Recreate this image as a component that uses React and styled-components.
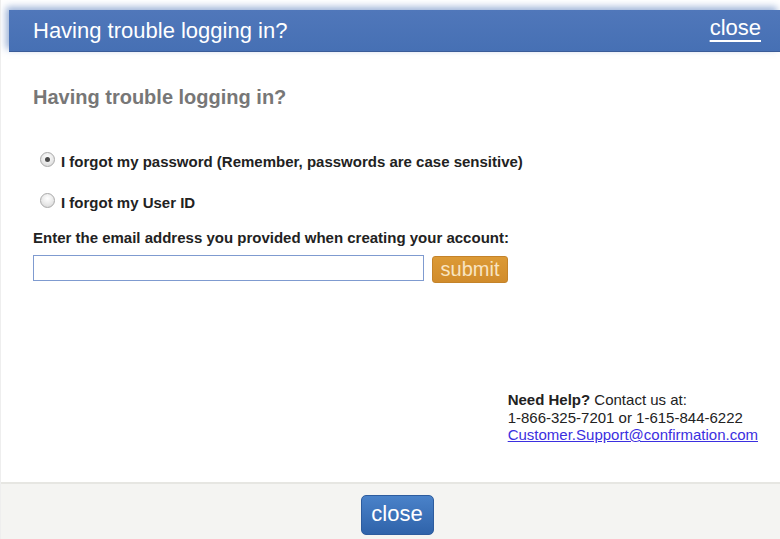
import React from "react";
import styled, { createGlobalStyle } from "styled-components";

const GlobalStyle = createGlobalStyle`
  html, body {
    margin: 0;
    padding: 0;
    background: #ffffff;
    font-family: "Liberation Sans", Arial, sans-serif;
  }
`;

const Dialog = styled.div`
  width: 780px;
  height: 539px;
  display: flex;
  flex-direction: column;
  overflow: hidden;
  background: #ffffff;
  border-left: 1px solid #eeeeee;
  box-sizing: border-box;
`;

const TitleBar = styled.div`
  margin: 10px 0 0 8px;
  height: 41px;
  display: flex;
  align-items: center;
  justify-content: space-between;
  padding: 0 19px 0 24px;
  background: linear-gradient(#5077ba, #4670b4);
  border-bottom: 1px solid #3a5c98;
  box-shadow: -3px -3px 7px rgba(74, 114, 182, 0.55);
`;

const Title = styled.div`
  color: #ffffff;
  font-size: 22px;
  padding-top: 1px;
`;

const TopClose = styled.a`
  color: #ffffff;
  font-size: 22px;
  text-decoration: underline;
  text-underline-offset: 5px;
  text-decoration-thickness: 2px;
  margin-bottom: 5px;
  cursor: pointer;
`;

const Body = styled.div`
  flex: 1;
  display: flex;
  flex-direction: column;
  padding-left: 32px;
`;

const Heading = styled.h2`
  margin: 33px 0 0;
  font-size: 20px;
  line-height: 24px;
  font-weight: 700;
  color: #777777;
`;

const Options = styled.div`
  margin-top: 42px;
  display: flex;
  flex-direction: column;
  gap: 21px;
`;

const Option = styled.label`
  display: flex;
  align-items: center;
  gap: 6px;
  height: 20px;
  padding-left: 7px;
  font-size: 15px;
  font-weight: 700;
  color: #222222;
`;

const Radio = styled.span`
  width: 13px;
  height: 13px;
  border-radius: 50%;
  border: 1px solid #a9a9a9;
  background: radial-gradient(circle at 50% 35%, #ffffff 0%, #e6e6e6 60%, #cfcfcf 100%);
  display: flex;
  align-items: center;
  justify-content: center;
  margin-top: -4px;
  flex-shrink: 0;

  &::after {
    content: "";
    width: 5px;
    height: 5px;
    border-radius: 50%;
    background: ${(p) => (p.$checked ? "#4a4a4a" : "transparent")};
  }
`;

const FieldLabel = styled.div`
  margin-top: 17px;
  font-size: 15px;
  line-height: 18px;
  font-weight: 700;
  color: #222222;
`;

const FieldRow = styled.div`
  margin-top: 8px;
  display: flex;
  align-items: flex-start;
  gap: 8px;
`;

const EmailInput = styled.input`
  width: 391px;
  height: 26px;
  box-sizing: border-box;
  border: 1px solid #7f9bd0;
  padding: 2px 4px;
  font-size: 15px;
  outline: none;
`;

const Submit = styled.button`
  height: 27px;
  width: 76px;
  margin-top: 1px;
  padding: 0;
  border: 1px solid #c4832a;
  border-radius: 3px;
  background: linear-gradient(#dc9a36, #d18c2c);
  color: #f8e4c2;
  font-family: "Liberation Sans", Arial, sans-serif;
  font-size: 20px;
  line-height: 25px;
`;

const Help = styled.div`
  align-self: flex-end;
  margin: 108px 22px 0 0;
  font-size: 15px;
  line-height: 17.5px;
  color: #222222;
`;

const HelpLine = styled.div``;

const SupportLink = styled.a`
  color: #3b2fe0;
  text-decoration: underline;
`;

const Footer = styled.div`
  height: 57px;
  box-sizing: border-box;
  flex-shrink: 0;
  display: flex;
  justify-content: center;
  align-items: flex-start;
  padding: 11px 0 0 13px;
  background: #f4f4f2;
  border-top: 2px solid #e6e6e2;
`;

const CloseButton = styled.button`
  width: 73px;
  height: 40px;
  border: 1px solid #2d5c9e;
  border-radius: 5px;
  background: linear-gradient(#4a82c9, #2f63aa);
  color: #ffffff;
  font-family: "Liberation Sans", Arial, sans-serif;
  font-size: 22px;
  padding: 0 0 2px;
`;

export default function App() {
  return (
    <>
      <GlobalStyle />
      <Dialog>
        <TitleBar>
          <Title>Having trouble logging in?</Title>
          <TopClose>close</TopClose>
        </TitleBar>
        <Body>
          <Heading>Having trouble logging in?</Heading>
          <Options>
            <Option>
              <Radio $checked />
              I forgot my password (Remember, passwords are case sensitive)
            </Option>
            <Option>
              <Radio />
              I forgot my User ID
            </Option>
          </Options>
          <FieldLabel>
            Enter the email address you provided when creating your account:
          </FieldLabel>
          <FieldRow>
            <EmailInput type="text" />
            <Submit>submit</Submit>
          </FieldRow>
          <Help>
            <HelpLine>
              <b>Need Help?</b> Contact us at:
            </HelpLine>
            <HelpLine>1-866-325-7201 or 1-615-844-6222</HelpLine>
            <HelpLine>
              <SupportLink href="#">Customer.Support@confirmation.com</SupportLink>
            </HelpLine>
          </Help>
        </Body>
        <Footer>
          <CloseButton>close</CloseButton>
        </Footer>
      </Dialog>
    </>
  );
}
